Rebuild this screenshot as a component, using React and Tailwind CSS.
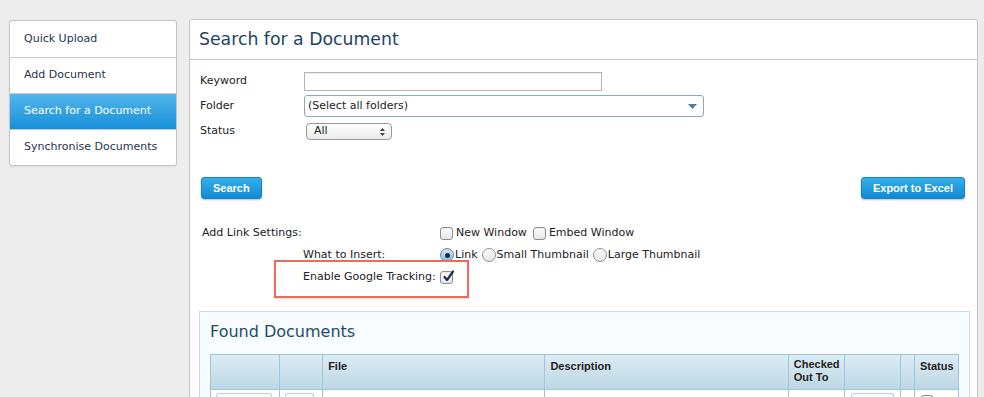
import React from 'react';

const font = { fontFamily: '"DejaVu Sans", Verdana, sans-serif' };

const navItems = ['Quick Upload', 'Add Document', 'Search for a Document', 'Synchronise Documents'];

const Checkbox = ({ checked }) => (
    <span className="inline-flex items-center justify-center w-[13px] h-[13px] rounded-[3px] border border-[#8e8e8e] bg-gradient-to-b from-white to-[#e6e6e6] shadow-[inset_0_1px_1px_rgba(0,0,0,0.08)] relative">
        {checked && (
            <svg width="13" height="13" viewBox="0 0 13 13" className="absolute -top-[2px] left-[1px]">
                <path d="M2.5 7 L5 10 L11 1.5" fill="none" stroke="#1c2f52" strokeWidth="2.2" strokeLinecap="round" strokeLinejoin="round" />
            </svg>
        )}
    </span>
);

const Radio = ({ checked }) => (
    <span className={`inline-flex items-center justify-center w-[14px] h-[14px] rounded-full border ${checked ? 'border-[#5f86ad] bg-gradient-to-b from-[#d3e6f8] to-[#8fbbe6]' : 'border-[#8e8e8e] bg-gradient-to-b from-white to-[#e4e4e4]'}`}>
        {checked && <span className="w-[5px] h-[5px] rounded-full bg-[#1b2a3d]" />}
    </span>
);

const BlueButton = ({ children }) => (
    <button
        className="h-[22px] px-[11px] rounded-[3px] bg-gradient-to-b from-[#35aeea] to-[#0c8bd5] border border-[#1485c7] text-white text-[11px] font-bold shadow-[0_1px_2px_rgba(0,0,0,0.25)]"
        style={{ fontFamily: '"Liberation Sans", Arial, sans-serif' }}
    >
        {children}
    </button>
);

const SmallBtn = ({ w }) => (
    <span className={`block ${w} h-[10px] rounded-t-[3px] border border-b-0 border-[#b9cfdb] bg-white`} />
);

const App = () => {
    return (
        <div className="min-h-[397px] bg-[#ededed] flex items-start gap-[12px] pl-[9px] pt-[19px] overflow-hidden text-[#222]" style={font}>
            {/* Sidebar nav */}
            <div className="mt-[1px] w-[168px] bg-white border border-[#c6c6c6] rounded-[3px] shadow-[0_1px_2px_rgba(0,0,0,0.08)] overflow-hidden">
                {navItems.map((item, i) => (
                    <div
                        key={item}
                        className={`h-[36px] flex items-center pl-[14px] text-[11px] ${i > 0 ? 'border-t border-[#cacaca]' : ''} ${i === 2 ? 'bg-gradient-to-b from-[#50b5ea] to-[#0f90db] text-white border-[#2a8fcf]' : 'text-[#1e3550]'}`}
                    >
                        {item}
                    </div>
                ))}
            </div>

            {/* Main panel */}
            <div className="w-[789px] h-[400px] bg-white border border-[#c6c6c6] rounded-t-[3px]">
                <div className="h-[40px] flex items-center pl-[9px] border-b border-[#c6c6c6]">
                    <h1 className="text-[17.3px] text-[#1d4568]">Search for a Document</h1>
                </div>

                {/* Search form */}
                <div className="pl-[10px] pt-[12px] text-[11px]">
                    <div className="flex items-center h-[19px]">
                        <span className="w-[104px]">Keyword</span>
                        <span className="w-[298px] h-[19px] border border-[#b5b5b5] bg-white shadow-[inset_0_1px_1px_rgba(0,0,0,0.08)]" />
                    </div>
                    <div className="flex items-center h-[22px] mt-[4px]">
                        <span className="w-[104px]">Folder</span>
                        <span className="w-[400px] h-[22px] border border-[#86a9c6] rounded-[3px] bg-white flex items-center justify-between pl-[3px] pr-[6px]">
                            <span>(Select all folders)</span>
                            <svg width="9" height="5" viewBox="0 0 9 5"><path d="M0 0 H9 L4.5 5 Z" fill="#5a7891" /></svg>
                        </span>
                    </div>
                    <div className="flex items-center h-[17px] mt-[6px]">
                        <span className="w-[106px]">Status</span>
                        <span className="w-[86px] h-[17px] border border-[#9a9a9a] rounded-[4px] bg-gradient-to-b from-white to-[#ececec] flex items-center justify-between pl-[7px] pr-[6px] text-[11px]">
                            <span>All</span>
                            <svg width="5" height="8" viewBox="0 0 5 8"><path d="M0 3 L2.5 0 L5 3 Z M0 5 L2.5 8 L5 5 Z" fill="#444" /></svg>
                        </span>
                    </div>
                </div>

                {/* Actions */}
                <div className="flex justify-between pl-[11px] pr-[12px] mt-[37px]">
                    <BlueButton>Search</BlueButton>
                    <BlueButton>Export to Excel</BlueButton>
                </div>

                {/* Link settings */}
                <div className="mt-[24px] text-[11px]">
                    <div className="flex items-center h-[20px] pl-[12px]">
                        <span className="w-[238px]">Add Link Settings:</span>
                        <span className="flex items-center gap-[3px]"><Checkbox /> New Window</span>
                        <span className="flex items-center gap-[3px] ml-[6px]"><Checkbox /> Embed Window</span>
                    </div>
                    <div className="flex items-center h-[20px] pl-[113px] mt-[2px]">
                        <span className="w-[137px]">What to Insert:</span>
                        <span className="flex items-center gap-[1px]"><Radio checked />Link</span>
                        <span className="flex items-center gap-[1px] ml-[4px]"><Radio />Small Thumbnail</span>
                        <span className="flex items-center gap-[1px] ml-[4px]"><Radio />Large Thumbnail</span>
                    </div>
                    <div className="relative flex items-center h-[20px] pl-[113px] mt-[2px]">
                        <span className="w-[137px]">Enable Google Tracking:</span>
                        <Checkbox checked />
                        <span className="absolute left-[84px] top-[-7px] w-[195px] h-[38px] border-2 border-[#ee6a5c] shadow-[0_1px_2px_rgba(0,0,0,0.15)]" />
                    </div>
                </div>

                {/* Found documents */}
                <div className="mt-[24px] ml-[9px] w-[771px] h-[100px] border border-[#c2dfeb] bg-[#f8fcfe] px-[10px]">
                    <h2 className="text-[16px] text-[#1e4b68] pt-[8px] h-[42px]">Found Documents</h2>
                    <table className="border-collapse w-[749px] text-[11px] font-bold" style={{ fontFamily: '"Liberation Sans", Arial, sans-serif' }}>
                        <thead>
                            <tr className="h-[35px] bg-gradient-to-b from-[#dcebf3] to-[#bcd7e4] align-top text-left">
                                <th className="w-[69px] border border-[#9cc6db]" />
                                <th className="w-[43px] border border-[#9cc6db]" />
                                <th className="w-[222px] border border-[#9cc6db] pl-[5px] pt-[3px] font-bold">File</th>
                                <th className="w-[243px] border border-[#9cc6db] pl-[5px] pt-[3px] font-bold">Description</th>
                                <th className="w-[56px] border border-[#9cc6db] pl-[5px] pt-[3px] font-bold leading-[13px]">Checked<br />Out To</th>
                                <th className="w-[56px] border border-[#9cc6db]" />
                                <th className="w-[14px] border border-[#9cc6db]" />
                                <th className="w-[44px] border border-[#9cc6db] pl-[5px] pt-[3px] font-bold">Status</th>
                            </tr>
                        </thead>
                        <tbody>
                            <tr className="h-[12px] bg-white align-top">
                                <td className="border border-[#9cc6db] pl-[5px] pt-[3px]"><SmallBtn w="w-[56px]" /></td>
                                <td className="border border-[#9cc6db] pl-[5px] pt-[3px]"><SmallBtn w="w-[29px]" /></td>
                                <td className="border border-[#9cc6db]" />
                                <td className="border border-[#9cc6db]" />
                                <td className="border border-[#9cc6db]" />
                                <td className="border border-[#9cc6db] pl-[6px] pt-[3px]"><SmallBtn w="w-[43px]" /></td>
                                <td className="border border-[#9cc6db]" />
                                <td className="border border-[#9cc6db] pl-[6px] pt-[5px]"><span className="block w-[12px] h-[8px] rounded-t-[3px] border border-b-0 border-[#8e8e8e]" /></td>
                            </tr>
                        </tbody>
                    </table>
                </div>
            </div>
        </div>
    );
};

export default App;
